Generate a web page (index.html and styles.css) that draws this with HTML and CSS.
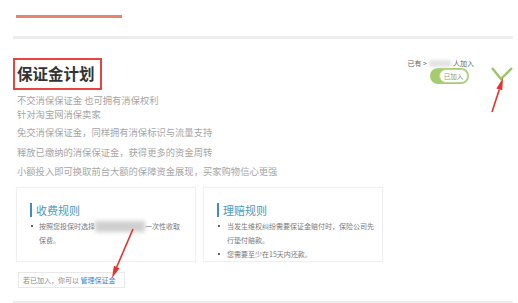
FILE: index.html
```html
<!DOCTYPE html>
<html lang="zh-CN">
<head>
<meta charset="utf-8">
<title>保证金计划</title>
<link rel="stylesheet" href="styles.css">
</head>
<body>
<div class="page">
  <div class="accent"></div>
  <div class="rule"></div>

  <div class="head">
    <div class="title-box"><h1 class="title">保证金计划</h1></div>
    <div class="join">
      <div class="join-col">
        <div class="join-count">已有 &gt; <span class="blur-light"></span> 人加入</div>
        <div class="toggle"><span class="toggle-knob">已加入</span></div>
      </div>
      <svg class="check" width="22" height="14" viewBox="0 0 22 14">
        <polyline points="1,1 10,12 21,1" fill="none" stroke="#9cc46a" stroke-width="2.4" stroke-linejoin="miter"/>
      </svg>
    </div>
  </div>

  <div class="desc">
    <div class="desc-top">
      <p>不交消保保证金 也可拥有消保权利</p>
      <p>针对淘宝网消保卖家</p>
    </div>
    <div class="desc-list">
      <p>免交消保保证金，同样拥有消保标识与流量支持</p>
      <p>释放已缴纳的消保保证金，获得更多的资金周转</p>
      <p>小额投入即可换取前台大额的保障资金展现，买家购物信心更强</p>
    </div>
  </div>

  <div class="cards">
    <div class="card card-fee">
      <h2 class="card-title">收费规则</h2>
      <ul class="rules">
        <li>按照您投保时选择<span class="blur-dark"></span>一次性收取<br>保费。</li>
      </ul>
    </div>
    <div class="card card-claim">
      <h2 class="card-title">理赔规则</h2>
      <ul class="rules">
        <li>当发生维权纠纷需要保证金赔付时，保险公司先<br>行垫付赔款。</li>
        <li>您需要至少在15天内还款。</li>
      </ul>
    </div>
  </div>

  <div class="manage">若已加入，你可以 <a class="manage-link" href="#">管理保证金</a></div>

  <div class="rule rule-bottom"></div>
</div>

<svg class="marks" width="518" height="303" viewBox="0 0 518 303">
  <line x1="492" y1="112" x2="499.3" y2="89.4" stroke="#e8302c" stroke-width="1.6"/>
  <polygon points="503,78 502.2,90.3 496.4,88.5" fill="#e8302c"/>
  <line x1="133" y1="229" x2="116.7" y2="267" stroke="#e8302c" stroke-width="1.6"/>
  <polygon points="112,278 119.5,268.2 113.9,265.8" fill="#e8302c"/>
</svg>
</body>
</html>
```

FILE: styles.css
```css
* { box-sizing: border-box; }

html, body {
  margin: 0;
  padding: 0;
  background: #ffffff;
}

body {
  width: 518px;
  height: 303px;
  overflow: hidden;
  position: relative;
  font-family: "Noto Sans CJK SC", "Noto Sans", sans-serif;
  color: #999;
}

p, h1, h2, ul { margin: 0; padding: 0; }

.page {
  padding: 15px 5px 0 13px;
}

.accent {
  width: 106px;
  height: 3px;
  margin-left: 3px;
  background: #e9846c;
}

.rule {
  height: 3px;
  margin-top: 18px;
  background: #ededed;
}

.head {
  display: flex;
  justify-content: space-between;
  align-items: flex-start;
  margin-top: 19px;
}

.title-box {
  width: 89px;
  height: 32px;
  border: 2px solid #e8433f;
  display: flex;
  align-items: center;
  padding-left: 2px;
}

.title {
  font-size: 15.5px;
  font-weight: 700;
  color: #333;
  line-height: 1;
}

.join {
  display: flex;
  align-items: flex-start;
}

.join-col {
  display: flex;
  flex-direction: column;
  align-items: flex-end;
}

.join-count {
  font-size: 7px;
  line-height: 10px;
  color: #666;
  display: flex;
  align-items: center;
  white-space: nowrap;
}

.blur-light {
  display: inline-block;
  width: 22px;
  height: 7px;
  margin: 0 2px;
  background: #e4e4e4;
  filter: blur(1.5px);
}

.toggle {
  width: 39px;
  height: 16px;
  margin-right: 5px;
  border-radius: 8px;
  background: #a5cd6e;
  display: flex;
  justify-content: flex-end;
  padding: 1px;
}

.toggle-knob {
  width: 29px;
  height: 14px;
  border-radius: 7px;
  background: #fff;
  border: 1px solid #b7d68e;
  font-size: 6.5px;
  line-height: 12px;
  color: #8a9a7a;
  text-align: center;
}

.check {
  display: block;
  margin-top: 9px;
  margin-left: 17px;
}

.desc {
  margin-left: 4px;
  margin-top: 3px;
  font-size: 9.3px;
  color: #a6a6a6;
}

.desc-top p {
  line-height: 14px;
}

.desc-list {
  margin-top: 2px;
}

.desc-list p {
  line-height: 19.5px;
}

.cards {
  display: flex;
  gap: 7px;
  margin-top: 5px;
  margin-left: 3px;
}

.card {
  width: 180px;
  height: 75px;
  border: 1px solid #f0f0f0;
  box-shadow: 0 0 2px rgba(0, 0, 0, 0.04);
  padding: 15px 6px 0 13px;
}

.card-title {
  font-size: 11px;
  font-weight: 400;
  line-height: 14px;
  color: #4d97bb;
  border-left: 2px solid #3f8fb5;
  padding-left: 4px;
  height: 14px;
  display: flex;
  align-items: center;
}

.rules {
  list-style: none;
  margin-top: 2px;
}

.rules li {
  position: relative;
  padding-left: 10px;
  font-size: 7px;
  line-height: 14px;
  color: #7a7a7a;
  white-space: nowrap;
}

.rules li::before {
  content: "";
  position: absolute;
  left: 1px;
  top: 6px;
  width: 2px;
  height: 2px;
  background: #666;
}

.card-fee .rules li { padding-left: 9px; }

.blur-dark {
  display: inline-block;
  width: 50px;
  height: 11px;
  vertical-align: middle;
  background: #cfcfcf;
  filter: blur(2px);
}

.manage {
  display: block;
  margin-top: 10px;
  margin-left: 5px;
  width: 107px;
  height: 16px;
  border: 1px solid #e8e8e8;
  padding-left: 4px;
  font-size: 7px;
  line-height: 14px;
  color: #8a8a8a;
  white-space: nowrap;
}

.manage-link {
  color: #3b86d1;
  text-decoration: none;
}

.rule-bottom {
  margin-top: 13px;
}

.marks {
  position: absolute;
  left: 0;
  top: 0;
  pointer-events: none;
}
```
